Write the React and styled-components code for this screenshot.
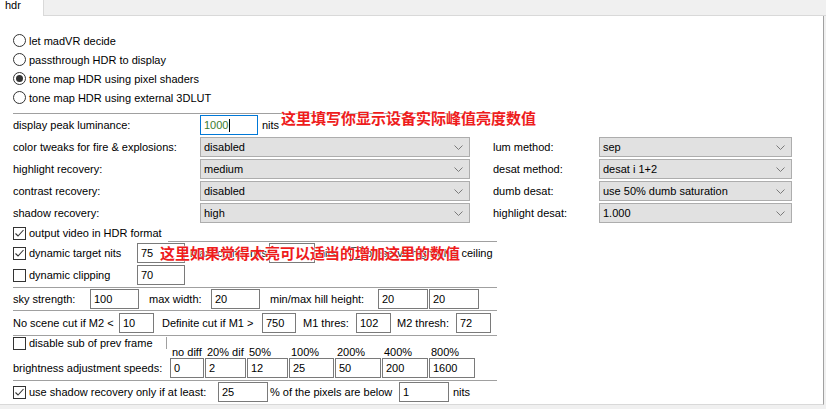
import React from 'react'
import styled, { createGlobalStyle } from 'styled-components'

const GlobalStyle = createGlobalStyle`
  body {
    margin: 0;
    background: #f0f0f0;
    font-family: 'Liberation Sans', Arial, sans-serif;
    font-size: 11px;
    color: #000;
  }
`

const Window = styled.div`
  width: 826px;
  height: 409px;
  overflow: hidden;
  background: #f0f0f0;
`

const TabStrip = styled.div`
  display: flex;
  height: 16px;
`

const Tab = styled.div`
  width: 43px;
  padding-left: 5px;
  box-sizing: border-box;
  background: #fff;
  line-height: 11px;
`

const TabRest = styled.div`
  flex: 1;
  border-left: 1px solid #d9d9d9;
  border-bottom: 1px solid #d9d9d9;
`

const Panel = styled.div`
  width: 824px;
  height: 389px;
  box-sizing: border-box;
  background: #fff;
  border-right: 1px solid #a0a0a0;
  border-bottom: 1px solid #d9d9d9;
  padding: 15px 0 0 13px;
`

const RadioList = styled.div`
  display: flex;
  flex-direction: column;
`

const RadioRow = styled.div`
  display: flex;
  align-items: center;
  gap: 3px;
  height: 19px;
`

const RadioCircle = styled.span`
  width: 13px;
  height: 13px;
  box-sizing: border-box;
  border: 1px solid #333;
  border-radius: 50%;
  display: flex;
  align-items: center;
  justify-content: center;
  &::after {
    content: '';
    width: 7px;
    height: 7px;
    border-radius: 50%;
    background: ${(p) => (p.$on ? '#333' : 'transparent')};
  }
`

const Rule = styled.div`
  width: 484px;
  height: 1px;
  background: #a0a0a0;
  margin-top: ${(p) => p.$mt || 0}px;
`

const SettingsGrid = styled.div`
  display: grid;
  grid-template-columns: 187px 293px 106px 193px;
  grid-auto-rows: 20px;
  row-gap: 2px;
  align-items: center;
  margin-top: 1px;
`

const Label = styled.span`
  display: flex;
  align-items: center;
  flex: none;
  height: 20px;
  white-space: nowrap;
  box-sizing: border-box;
  width: ${(p) => (p.$w ? `${p.$w}px` : 'auto')};
  padding-left: ${(p) => p.$pl || 0}px;
`

const PeakCell = styled.div`
  grid-column: span 3;
  display: flex;
  align-items: center;
  gap: 4px;
  position: relative;
  height: 20px;
`

const Field = styled.div`
  flex: none;
  width: ${(p) => p.$w}px;
  height: 20px;
  box-sizing: border-box;
  border: 1px solid ${(p) => (p.$focus ? '#0078d7' : '#7a7a7a')};
  background: #fff;
  padding-left: 3px;
  line-height: 18px;
  color: ${(p) => (p.$focus ? '#3d7b2f' : '#000')};
  display: flex;
  align-items: center;
`

const Caret = styled.span`
  width: 1px;
  height: 13px;
  background: #000;
  margin-left: 1px;
`

const Note = styled.span`
  position: absolute;
  left: ${(p) => p.$left}px;
  top: ${(p) => p.$top}px;
  line-height: 20px;
  font-family: 'Noto Sans CJK SC', 'Noto Sans', sans-serif;
  font-size: 15px;
  font-weight: 700;
  color: #ee1c1c;
  white-space: nowrap;
  text-shadow: 0 0 1px #fff, 0 0 2px #fff;
`

const Select = styled.div`
  width: ${(p) => p.$w}px;
  height: 20px;
  box-sizing: border-box;
  border: 1px solid #adadad;
  background: #e1e1e1;
  display: flex;
  align-items: center;
  justify-content: space-between;
  padding: 0 6px 0 3px;
`

const GroupHead = styled.div`
  display: flex;
  height: 16px;
  margin-top: 3px;
  width: 484px;
`

const CheckLabel = styled.label`
  display: flex;
  align-items: center;
  gap: 3px;
  flex: none;
  height: ${(p) => p.$h || 14}px;
  width: ${(p) => (p.$w ? `${p.$w}px` : 'auto')};
  white-space: nowrap;
`

const Box = styled.span`
  width: 13px;
  height: 13px;
  box-sizing: border-box;
  border: 1px solid #333;
  background: #fff;
  display: flex;
  flex: none;
`

const HeadLine = styled.div`
  flex: 1;
  align-self: flex-end;
  height: 1px;
  margin-left: 6px;
  background: #a0a0a0;
`

const Row = styled.div`
  display: flex;
  align-items: center;
  height: 20px;
  margin-top: ${(p) => p.$mt || 0}px;
  position: relative;
`

const SpeedBlock = styled.div`
  display: grid;
  grid-template-columns: 157px auto;
  grid-template-rows: 10px 11px 20px;
  margin-top: 1px;
  width: 484px;
`

const PrevFrame = styled.div`
  grid-column: 1;
  grid-row: 1 / 3;
  width: 153px;
  height: 12px;
  border-right: 1px solid #a0a0a0;
  display: flex;
  align-items: center;
`

const SpeedHeads = styled.div`
  grid-column: 2;
  grid-row: 2;
  display: flex;
  gap: 1px;
  line-height: 11px;
`

const SpeedHead = styled.span`
  width: ${(p) => p.$w}px;
  padding-left: 2px;
  box-sizing: border-box;
  white-space: nowrap;
`

const SpeedLabel = styled.span`
  grid-column: 1;
  grid-row: 3;
  display: flex;
  align-items: center;
  white-space: nowrap;
`

const SpeedFields = styled.div`
  grid-column: 2;
  grid-row: 3;
  display: flex;
  gap: 1px;
`

const Chevron = () => (
  <svg width="9" height="5" viewBox="0 0 9 5">
    <polyline points="0.5,0.5 4.5,4.5 8.5,0.5" fill="none" stroke="#7a7a7a" strokeWidth="1" />
  </svg>
)

const Check = ({ on }) => (
  <Box>
    {on && (
      <svg width="11" height="11" viewBox="0 0 11 11">
        <polyline points="1.5,5.5 4,8 9.5,2" fill="none" stroke="#333" strokeWidth="1.1" />
      </svg>
    )}
  </Box>
)

const radios = [
  { text: 'let madVR decide' },
  { text: 'passthrough HDR to display' },
  { text: 'tone map HDR using pixel shaders', on: true },
  { text: 'tone map HDR using external 3DLUT' },
]

const settings = [
  ['color tweaks for fire & explosions:', 'disabled', 'lum method:', 'sep'],
  ['highlight recovery:', 'medium', 'desat method:', 'desat i 1+2'],
  ['contrast recovery:', 'disabled', 'dumb desat:', 'use 50% dumb saturation'],
  ['shadow recovery:', 'high', 'highlight desat:', '1.000'],
]

const speeds = [
  { head: 'no diff', value: '0', w: 34 },
  { head: '20% dif', value: '2', w: 41 },
  { head: '50%', value: '12', w: 41 },
  { head: '100%', value: '25', w: 45 },
  { head: '200%', value: '50', w: 46 },
  { head: '400%', value: '200', w: 46 },
  { head: '800%', value: '1600', w: 46 },
]

export default function App() {
  return (
    <Window>
      <GlobalStyle />
      <TabStrip>
        <Tab>hdr</Tab>
        <TabRest />
      </TabStrip>
      <Panel>
        <RadioList>
          {radios.map((r) => (
            <RadioRow key={r.text}>
              <RadioCircle $on={r.on} />
              {r.text}
            </RadioRow>
          ))}
        </RadioList>
        <Rule $mt={6} />

        <SettingsGrid>
          <Label>display peak luminance:</Label>
          <PeakCell>
            <Field $w={58} $focus>
              1000
              <Caret />
            </Field>
            nits
            <Note $left={81} $top={-7}>这里填写你显示设备实际峰值亮度数值</Note>
          </PeakCell>
          {settings.map(([l, v, rl, rv]) => (
            <React.Fragment key={l}>
              <Label>{l}</Label>
              <Select $w={270}>
                {v}
                <Chevron />
              </Select>
              <Label>{rl}</Label>
              <Select $w={193}>
                {rv}
                <Chevron />
              </Select>
            </React.Fragment>
          ))}
        </SettingsGrid>

        <GroupHead>
          <CheckLabel>
            <Check on />
            output video in HDR format
          </CheckLabel>
          <HeadLine />
        </GroupHead>

        <Row $mt={1}>
          <CheckLabel $w={124}>
            <Check on />
            dynamic target nits
          </CheckLabel>
          <Field $w={48}>75</Field>
          <Label $w={84} $pl={5}>max. comp. nits</Label>
          <Field $w={46} />
          <Label $w={35} $pl={4}>nits</Label>
          <CheckLabel>
            <Check />
            preserve highlights ceiling
          </CheckLabel>
          <Note $left={147} $top={0}>这里如果觉得太亮可以适当的增加这里的数值</Note>
        </Row>
        <Row $mt={2}>
          <CheckLabel $w={124}>
            <Check />
            dynamic clipping
          </CheckLabel>
          <Field $w={48}>70</Field>
        </Row>
        <Rule $mt={2} />

        <Row $mt={1}>
          <Label $w={77}>sky strength:</Label>
          <Field $w={49}>100</Field>
          <Label $w={72} $pl={10}>max width:</Label>
          <Field $w={49}>20</Field>
          <Label $w={118} $pl={10}>min/max hill height:</Label>
          <Field $w={50}>20</Field>
          <Field $w={50} style={{ marginLeft: 1 }}>20</Field>
        </Row>
        <Rule $mt={1} />

        <Row $mt={2}>
          <Label $w={106}>No scene cut if M2 &lt;</Label>
          <Field $w={35}>10</Field>
          <Label $w={108} $pl={8}>Definite cut if M1 &gt;</Label>
          <Field $w={34}>750</Field>
          <Label $w={60} $pl={7}>M1 thres:</Label>
          <Field $w={35}>102</Field>
          <Label $w={65} $pl={6}>M2 thresh:</Label>
          <Field $w={35}>72</Field>
        </Row>
        <Rule $mt={2} />

        <SpeedBlock>
          <PrevFrame>
            <CheckLabel $h={12}>
              <Check />
              disable sub of prev frame
            </CheckLabel>
          </PrevFrame>
          <SpeedHeads>
            {speeds.map((s) => (
              <SpeedHead key={s.head} $w={s.w}>
                {s.head}
              </SpeedHead>
            ))}
          </SpeedHeads>
          <SpeedLabel>brightness adjustment speeds:</SpeedLabel>
          <SpeedFields>
            {speeds.map((s) => (
              <Field key={s.head} $w={s.w}>
                {s.value}
              </Field>
            ))}
          </SpeedFields>
        </SpeedBlock>
        <Rule $mt={2} />

        <Row $mt={1}>
          <CheckLabel $w={205}>
            <Check on />
            use shadow recovery only if at least:
          </CheckLabel>
          <Field $w={50}>25</Field>
          <Label $w={131} $pl={2}>% of the pixels are below</Label>
          <Field $w={50}>1</Field>
          <Label $pl={4}>nits</Label>
        </Row>
      </Panel>
    </Window>
  )
}
